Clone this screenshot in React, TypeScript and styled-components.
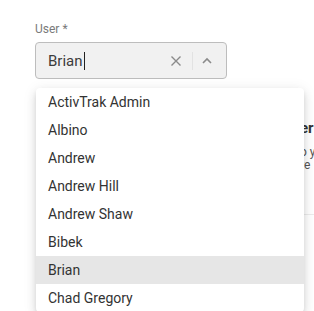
import React from 'react';
import styled, { createGlobalStyle } from 'styled-components';

const GlobalStyle = createGlobalStyle`
  html, body {
    margin: 0;
    padding: 0;
    background: #ffffff;
    overflow: hidden;
  }
  body {
    font-family: Roboto, "Liberation Sans", sans-serif;
  }
`;

const Page = styled.div`
  display: flex;
  width: 314px;
  height: 311px;
  overflow: hidden;
`;

const FormColumn = styled.section`
  position: relative;
  padding: 21px 0 0 35px;
  width: 268px;
  flex-shrink: 0;
`;

const Label = styled.div`
  font-size: 12px;
  line-height: 16px;
  color: #7a7a7a;
  margin-bottom: 5px;
`;

const Field = styled.div`
  display: flex;
  align-items: center;
  box-sizing: border-box;
  width: 192px;
  height: 37px;
  padding: 0 11px 0 12px;
  background: #f1f1f1;
  border: 1px solid #bdbdbd;
  border-radius: 4px;
`;

const Value = styled.div`
  flex: 1;
  display: flex;
  align-items: center;
  font-size: 15px;
  color: #3c3c3c;
`;

const Caret = styled.span`
  display: inline-block;
  width: 1px;
  height: 18px;
  background: #222;
  margin-left: 1px;
`;

const IconButton = styled.span`
  display: flex;
  align-items: center;
  justify-content: center;
  width: 16px;
  height: 16px;
  color: #8a8a8a;
`;

const Divider = styled.span`
  width: 1px;
  height: 18px;
  background: #e2e2e2;
  margin: 0 6px 0 8px;
`;

const Menu = styled.ul`
  position: absolute;
  top: 88px;
  left: 36px;
  width: 268px;
  margin: 0;
  padding: 0;
  list-style: none;
  background: #ffffff;
  border-radius: 4px;
  box-shadow: 0 3px 5px -1px rgba(0, 0, 0, 0.12), 0 5px 10px 1px rgba(0, 0, 0, 0.08),
    0 2px 14px 2px rgba(0, 0, 0, 0.06);
  z-index: 2;
`;

const Option = styled.li<{ $selected?: boolean }>`
  height: 28px;
  line-height: 28px;
  padding-left: 12px;
  font-size: 14px;
  color: #333333;
  background: ${(p) => (p.$selected ? '#e6e6e6' : 'transparent')};
`;

const BackPanel = styled.section`
  flex-shrink: 0;
  padding-top: 118px;
  width: 200px;
  margin-left: -3px;
  white-space: nowrap;
`;

const BackTitle = styled.div`
  font-size: 15px;
  font-weight: 700;
  color: #333;
  line-height: 20px;
`;

const BackText = styled.div<{ $first?: boolean }>`
  font-size: 12px;
  color: #555;
  line-height: 13px;
  margin-top: ${(p) => (p.$first ? '8px' : '0')};
`;

const BackRule = styled.div`
  margin-top: 42px;
  border-top: 1px solid #ececec;
`;

const users = [
  'ActivTrak Admin',
  'Albino',
  'Andrew',
  'Andrew Hill',
  'Andrew Shaw',
  'Bibek',
  'Brian',
  'Chad Gregory',
];

const App = () => {
  const selected = 'Brian';

  return (
    <>
      <GlobalStyle />
      <Page>
        <FormColumn>
          <Label>User *</Label>
          <Field>
            <Value>
              {selected}
              <Caret />
            </Value>
            <IconButton>
              <svg width="12" height="12" viewBox="0 0 12 12">
                <path d="M1.5 1.5 L10.5 10.5 M10.5 1.5 L1.5 10.5" stroke="currentColor" strokeWidth="1.4" fill="none" />
              </svg>
            </IconButton>
            <Divider />
            <IconButton>
              <svg width="12" height="12" viewBox="0 0 12 12">
                <path d="M2 8 L6 4 L10 8" stroke="currentColor" strokeWidth="1.6" fill="none" />
              </svg>
            </IconButton>
          </Field>
          <Menu>
            {users.map((u) => (
              <Option key={u} $selected={u === selected}>
                {u}
              </Option>
            ))}
          </Menu>
        </FormColumn>
        <BackPanel>
          <BackTitle>er</BackTitle>
          <BackText $first>o y</BackText>
          <BackText>re</BackText>
          <BackRule />
        </BackPanel>
      </Page>
    </>
  );
};

export default App;
